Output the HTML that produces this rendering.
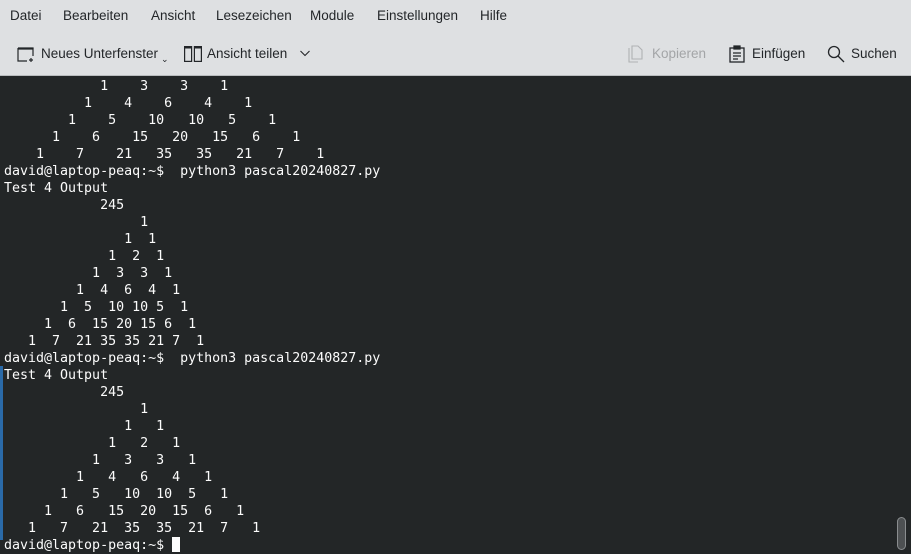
<!DOCTYPE html>
<html><head><meta charset="utf-8"><style>
*{margin:0;padding:0;box-sizing:border-box}
body{width:911px;height:554px;overflow:hidden;background:#232627;font-family:"Liberation Sans","DejaVu Sans",sans-serif;position:relative}
#top{position:absolute;left:0;top:0;width:911px;height:76px;background:#dee0e2;border-bottom:1px solid #b9bcbe}
.m{position:absolute;top:8px;font-size:13.5px;color:#232629}
.t{position:absolute;top:46px;font-size:13.5px;color:#232629}
.dis{color:#a3a5a7}
#term{position:absolute;left:4px;top:78px;font-family:"DejaVu Sans Mono",monospace;font-size:13.3px;line-height:17px;color:#fcfcfc;white-space:pre}
#bar{position:absolute;left:0;top:366px;width:3px;height:174px;background:#2a6aa8}
#cur{position:absolute;left:172px;top:537px;width:8px;height:15px;background:#fcfcfc}
#sb{position:absolute;left:897px;top:517px;width:9px;height:33px;border:1px solid #8a8d8f;border-radius:5px;background:#4d5052}
</style></head><body>
<div id="top">
<span class="m" style="left:10px">Datei</span>
<span class="m" style="left:63px">Bearbeiten</span>
<span class="m" style="left:151px">Ansicht</span>
<span class="m" style="left:216px">Lesezeichen</span>
<span class="m" style="left:310px">Module</span>
<span class="m" style="left:377px">Einstellungen</span>
<span class="m" style="left:480px">Hilfe</span>
<svg style="position:absolute;left:17px;top:45px" width="18" height="18" viewBox="0 0 18 18" fill="none" stroke="#232629" stroke-width="1.2"><path d="M1 3h11M1 3v13h9M16 8v3M1 4h15v4"/><path d="M12 3h4v1" /><path d="M14 13v4M12 15h4"/></svg>
<span class="t" style="left:41px">Neues Unterfenster</span>
<span style="position:absolute;left:161px;top:54px;font-size:9px;color:#232629">⌄</span>
<svg style="position:absolute;left:184px;top:46px" width="18" height="16" viewBox="0 0 18 16" fill="none" stroke="#232629" stroke-width="1.2"><rect x="0.6" y="0.6" width="7" height="14.8"/><rect x="10.4" y="0.6" width="7" height="14.8"/><path d="M1 1.5h6M11 1.5h6" stroke-width="2"/></svg>
<span class="t" style="left:207px">Ansicht teilen</span>
<svg style="position:absolute;left:300px;top:50px" width="10" height="7" viewBox="0 0 10 7" fill="none" stroke="#232629" stroke-width="1.1"><path d="M0.5 1l4.5 4.5 4.5-4.5"/></svg>
<svg style="position:absolute;left:628px;top:45px" width="15" height="18" viewBox="0 0 15 18" fill="none" stroke="#b0b2b4" stroke-width="1.1"><path d="M1 3v14h9M4 1h6l4 4v9H4z"/></svg>
<span class="t dis" style="left:652px">Kopieren</span>
<svg style="position:absolute;left:729px;top:45px" width="16" height="18" viewBox="0 0 16 18" fill="none" stroke="#232629" stroke-width="1.3"><rect x="1" y="3" width="14" height="14"/><path d="M5 1h6v3H5z" fill="#232629"/><path d="M4 8h8M4 11h8M4 14h5"/></svg>
<span class="t" style="left:752px">Einfügen</span>
<svg style="position:absolute;left:827px;top:45px" width="18" height="18" viewBox="0 0 18 18" fill="none" stroke="#232629" stroke-width="1.3"><circle cx="7" cy="7" r="5.5"/><path d="M11 11l6 6"/></svg>
<span class="t" style="left:851px">Suchen</span>
</div>
<div id="bar"></div>
<div id="term">            1    3    3    1
          1    4    6    4    1
        1    5    10   10   5    1
      1    6    15   20   15   6    1
    1    7    21   35   35   21   7    1
david@laptop-peaq:~$  python3 pascal20240827.py
Test 4 Output
            245
                 1
               1  1
             1  2  1
           1  3  3  1
         1  4  6  4  1
       1  5  10 10 5  1
     1  6  15 20 15 6  1
   1  7  21 35 35 21 7  1
david@laptop-peaq:~$  python3 pascal20240827.py
Test 4 Output
            245
                 1
               1   1
             1   2   1
           1   3   3   1
         1   4   6   4   1
       1   5   10  10  5   1
     1   6   15  20  15  6   1
   1   7   21  35  35  21  7   1
david@laptop-peaq:~$ </div>
<div id="cur"></div>
<div id="sb"></div>
</body></html>
